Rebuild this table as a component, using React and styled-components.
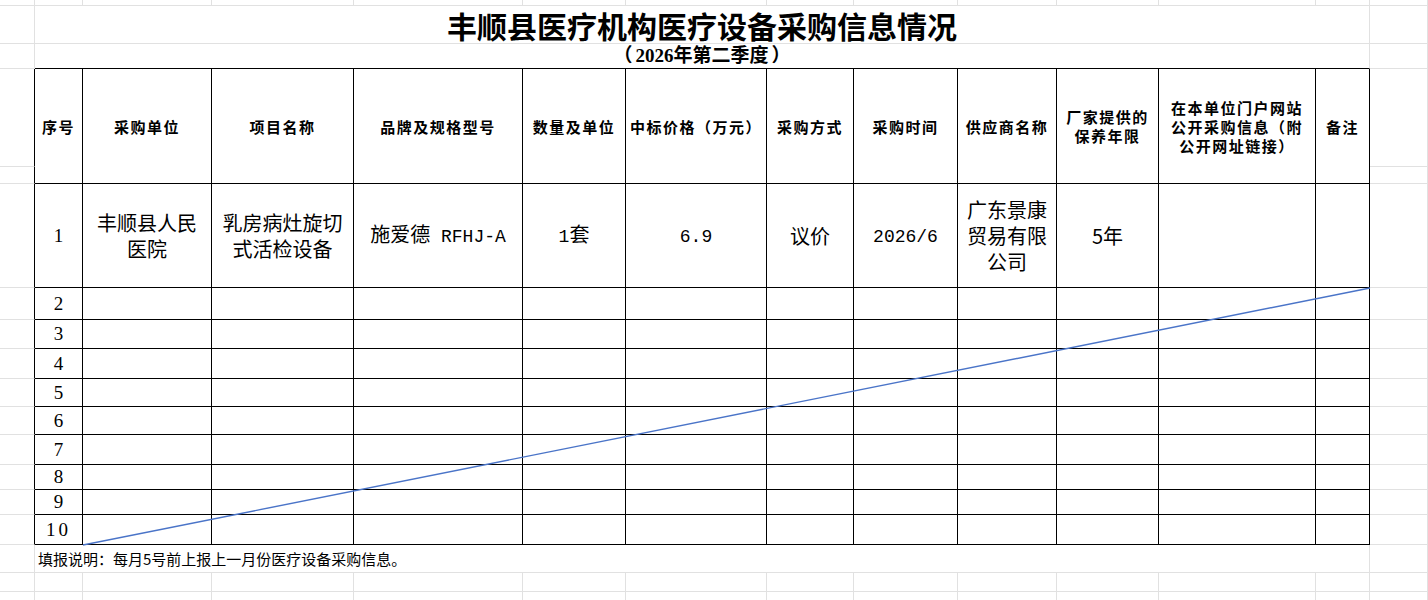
import React from 'react';
import styled, { createGlobalStyle } from 'styled-components';

// spreadsheet geometry, px
const COLS = [35, 48, 129, 142, 169, 103, 141, 87, 104, 99, 102, 157, 54, 58];
const ROWS = [6, 38, 25, 98, 17, 104, 32, 29, 30, 28, 28, 30, 25, 25, 30, 28, 19, 19];

const INK = '#000';
const GRID = '#e1e1e1';
const CJK = '"Noto Sans CJK SC", "Noto Sans", sans-serif';

const sum = (arr, n) => arr.slice(0, n).reduce((a, b) => a + b, 0);

const GlobalStyle = createGlobalStyle`
  html, body {
    margin: 0;
    padding: 0;
    background: #fff;
  }
  body {
    font-family: ${CJK};
    color: #000;
  }
`;

const Sheet = styled.div`
  position: relative;
  display: grid;
  grid-template-columns: ${COLS.map((w) => w + 'px').join(' ')};
  grid-template-rows: ${ROWS.map((h) => h + 'px').join(' ')};
  width: 1428px;
  height: 600px;
  overflow: hidden;
  background: #fff;
`;

const Cell = styled.div`
  grid-column: ${(p) => p.$c + 1} / span ${(p) => p.$cs || 1};
  grid-row: ${(p) => p.$r + 1} / span ${(p) => p.$rs || 1};
  box-sizing: border-box;
  min-width: 0;
  min-height: 0;
  border-right: 1px solid ${(p) => (p.$inkR ? INK : GRID)};
  border-bottom: 1px solid ${(p) => (p.$inkB ? INK : GRID)};
  display: flex;
  align-items: center;
  justify-content: center;
  text-align: center;
`;

const TitleCell = styled(Cell)`
  font-size: 30px;
  font-weight: 700;
  line-height: 38px;
  white-space: nowrap;
`;

const SubtitleCell = styled(Cell)`
  font-family: "Liberation Serif", ${CJK};
  font-size: 19px;
  font-weight: 700;
  line-height: 24px;
  white-space: nowrap;
`;

const Paren = styled.span`
  margin: 0 ${(p) => (p.$open ? '3px 0 -3px' : '-3px 0 3px')};
`;

const HeadCell = styled(Cell)`
  padding: 0 2px;
  font-size: 15px;
  font-weight: 700;
  line-height: 19px;
  letter-spacing: 1.5px;
`;

const IndexCell = styled(Cell)`
  font-family: "Liberation Serif", serif;
  font-size: 19px;
  letter-spacing: ${(p) => (p.$wide ? '3px' : '0')};
`;

const DataCell = styled(Cell)`
  padding: 0 8px;
  font-size: 20px;
  line-height: 26px;
`;

const Latin = styled.span`
  font-family: "Liberation Mono", monospace;
  font-size: 18px;
`;

const NoteCell = styled(Cell)`
  justify-content: flex-start;
  padding-left: 3px;
  font-size: 15px;
  white-space: nowrap;
`;

const Strike = styled.svg`
  position: absolute;
  left: 0;
  top: 0;
  pointer-events: none;
`;

const HEADERS = [
  ['序号'],
  ['采购单位'],
  ['项目名称'],
  ['品牌及规格型号'],
  ['数量及单位'],
  ['中标价格（万元）'],
  ['采购方式'],
  ['采购时间'],
  ['供应商名称'],
  ['厂家提供的', '保养年限'],
  ['在本单位门户网站', '公开采购信息（附', '公开网址链接）'],
  ['备注'],
];

const FIRST = [
  '丰顺县人民医院',
  '乳房病灶旋切式活检设备',
  <>施爱德<Latin> RFHJ-A</Latin></>,
  <><Latin>1</Latin>套</>,
  <Latin>6.9</Latin>,
  '议价',
  <Latin>2026/6</Latin>,
  '广东景康贸易有限公司',
  '5年',
  '',
  '',
];

const HEAD_ROW = 3;
const DATA_ROW = 5;
const LAST_ROW = 14;
const NOTE_ROW = 15;

function blanks() {
  const out = [];
  for (let r = 0; r < ROWS.length; r++) {
    out.push({ r, c: 0, ink: r >= HEAD_ROW && r <= LAST_ROW });
    out.push({ r, c: 13 });
    if (r === 0 || r > NOTE_ROW) {
      for (let c = 1; c <= 12; c++) out.push({ r, c });
    }
  }
  return out;
}

export default function App() {
  const x1 = sum(COLS, 2);
  const y1 = sum(ROWS, LAST_ROW + 1);
  const x2 = sum(COLS, 13);
  const y2 = sum(ROWS, DATA_ROW + 1);

  return (
    <>
      <GlobalStyle />
      <Sheet>
        {blanks().map((b) => (
          <Cell key={`b-${b.r}-${b.c}`} $r={b.r} $c={b.c} $inkR={b.ink} />
        ))}

        <TitleCell $r={1} $c={1} $cs={12}>丰顺县医疗机构医疗设备采购信息情况</TitleCell>
        <SubtitleCell $r={2} $c={1} $cs={12} $inkB>
          <Paren $open>（</Paren>2026年第二季度<Paren>）</Paren>
        </SubtitleCell>

        {HEADERS.map((lines, i) => (
          <HeadCell key={`h-${i}`} $r={HEAD_ROW} $rs={2} $c={i + 1} $inkR $inkB>
            <div>
              {lines.map((l, j) => (
                <React.Fragment key={j}>
                  {j > 0 && <br />}
                  {l}
                </React.Fragment>
              ))}
            </div>
          </HeadCell>
        ))}

        <IndexCell $r={DATA_ROW} $c={1} $inkR $inkB>1</IndexCell>
        {FIRST.map((v, i) => (
          <DataCell key={`d-${i}`} $r={DATA_ROW} $c={i + 2} $inkR $inkB>
            <div>{v}</div>
          </DataCell>
        ))}

        {Array.from({ length: 9 }, (_, k) => {
          const r = DATA_ROW + 1 + k;
          const n = k + 2;
          return (
            <React.Fragment key={`row-${n}`}>
              <IndexCell $r={r} $c={1} $inkR $inkB $wide={n > 9}>{n}</IndexCell>
              {Array.from({ length: 11 }, (_, i) => (
                <DataCell key={i} $r={r} $c={i + 2} $inkR $inkB />
              ))}
            </React.Fragment>
          );
        })}

        <NoteCell $r={NOTE_ROW} $c={1} $cs={12}>
          填报说明：每月5号前上报上一月份医疗设备采购信息。
        </NoteCell>

        <Strike width="1428" height="600">
          <line x1={x1} y1={y1} x2={x2} y2={y2} stroke="#4a74c8" strokeWidth="1.4" />
        </Strike>
      </Sheet>
    </>
  );
}
